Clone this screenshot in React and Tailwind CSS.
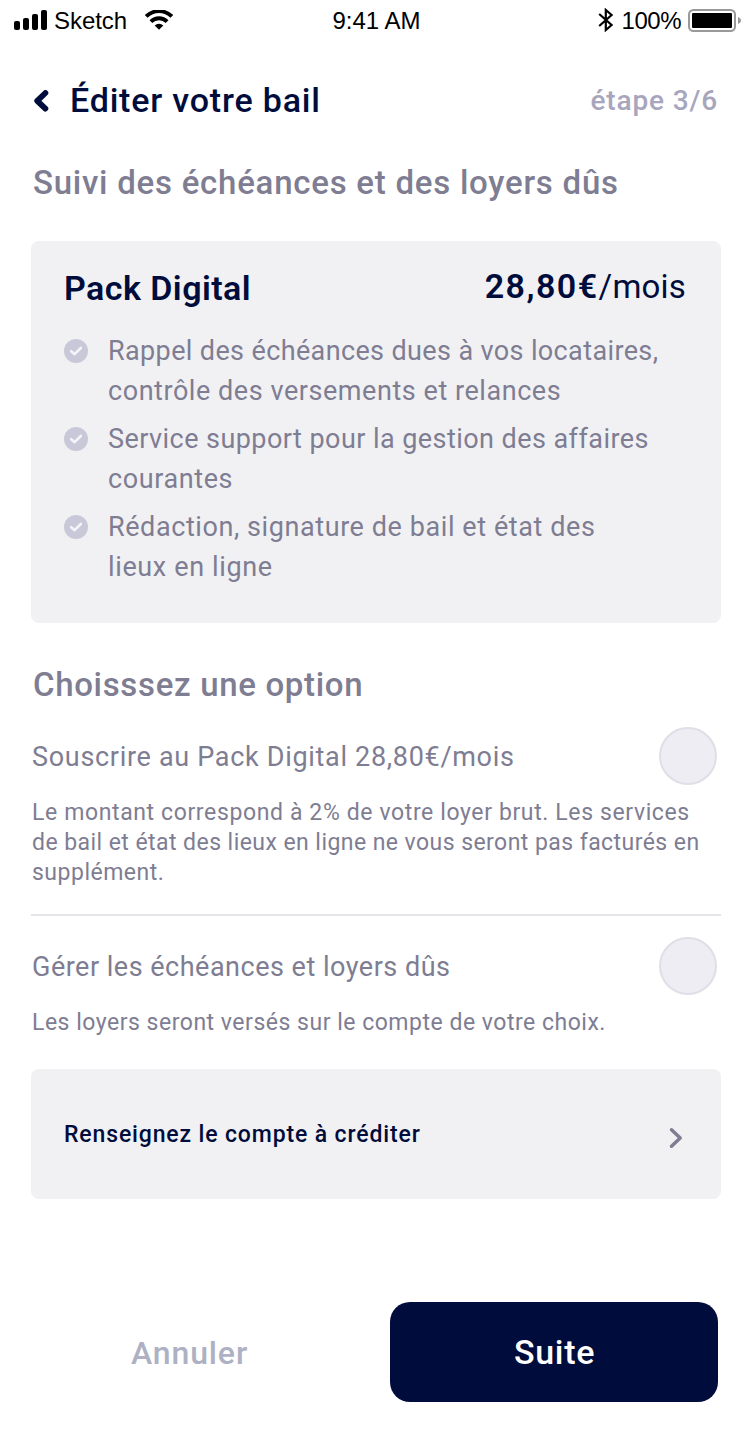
const FEATURES = [
  [
    { text: 'Rappel des échéances dues à vos locataires,', spacing: 'tracking-[0.37px]' },
    { text: 'contrôle des versements et relances', spacing: 'tracking-[0.55px]' },
  ],
  [
    { text: 'Service support pour la gestion des affaires', spacing: 'tracking-[0.44px]' },
    { text: 'courantes', spacing: 'tracking-[0.6px]' },
  ],
  [
    { text: 'Rédaction, signature de bail et état des', spacing: 'tracking-[0.58px]' },
    { text: 'lieux en ligne', spacing: 'tracking-[0.63px]' },
  ],
];

function StatusBar() {
  return (
    <div className="grid h-10 grid-cols-3 items-center pl-3.5 pr-[9px] font-['Liberation_Sans',sans-serif] text-[24px] leading-[40px] text-black">
      <div className="flex items-center">
        <svg width="33" height="20" viewBox="0 0 33 20" className="shrink-0">
          <rect x="0" y="11" width="6" height="9" rx="2" />
          <rect x="9" y="8" width="6" height="12" rx="2" />
          <rect x="18" y="4" width="6" height="16" rx="2" />
          <rect x="27" y="0" width="6" height="20" rx="2" />
        </svg>
        <span className="ml-[7px] translate-y-px tracking-[-0.05px]">Sketch</span>
        <svg width="28" height="20" viewBox="0 0 28 20" className="ml-[18px] shrink-0" fill="none" stroke="#000">
          <path d="M1.2 6.4A18.2 18.2 0 0 1 26.8 6.4" strokeWidth="3.9" />
          <path d="M5.9 11.6A11.6 11.6 0 0 1 22.1 11.6" strokeWidth="3.9" />
          <path d="M14 19.7 L9.7 15.5 A6.2 6.2 0 0 1 18.3 15.5 Z" fill="#000" stroke="none" />
        </svg>
      </div>
      <div className="translate-y-px whitespace-nowrap pr-0.5 text-center">9:41 AM</div>
      <div className="flex items-center justify-end">
        <svg width="16" height="24" viewBox="0 0 16 24" className="shrink-0" fill="none" stroke="#000" strokeWidth="2.2">
          <path d="M1.2 6 L13.6 17 L7.8 22 V2 L13.6 7 L1.2 18" />
        </svg>
        <span className="ml-2 translate-y-px tracking-[-0.5px]">100%</span>
        <svg width="53" height="23" viewBox="0 0 53 23" className="ml-[7px] shrink-0">
          <rect x="1" y="1" width="46" height="21" rx="4.5" fill="none" stroke="#999" strokeWidth="2" />
          <rect x="4" y="4" width="40" height="15" rx="1" />
          <path d="M50 8 C52 8.8 53 10 53 11.5 S52 14.2 50 15 Z" fill="#999" />
        </svg>
      </div>
    </div>
  );
}

function CheckBadge() {
  return (
    <svg width="24" height="24" viewBox="0 0 24 24" className="mt-2 shrink-0">
      <circle cx="12" cy="12" r="12" fill="#c9c8d8" />
      <path d="M7.2 12.2 L10.6 15.2 L16.8 9" fill="none" stroke="#f4f4f8" strokeWidth="2.6" strokeLinecap="round" strokeLinejoin="round" />
    </svg>
  );
}

function Radio({ label }) {
  return (
    <button
      type="button"
      role="radio"
      aria-checked="false"
      aria-label={label}
      className="mr-[2px] size-[58px] shrink-0 rounded-full border-2 border-[#dfdfe7] bg-[#eeedf3]"
    />
  );
}

export default function App() {
  return (
    <div className="h-[1434px] w-[750px] whitespace-nowrap bg-white font-['Roboto',sans-serif] text-[#7e7d92]">
      <StatusBar />

      <header className="mt-[41px] flex h-10 items-start pl-[33px] pr-[32px]">
        <svg width="16" height="22" viewBox="0 0 16 22" className="mt-[9px] shrink-0" fill="none" stroke="#000c3b" strokeWidth="5.8" strokeLinecap="round" strokeLinejoin="round">
          <path d="M12.4 3 L4.2 10.8 L12.4 18.6" />
        </svg>
        <h1 className="ml-[21px] text-[34px] font-medium leading-[38px] tracking-[0.8px] text-[#000c3b]">Éditer votre bail</h1>
        <span className="ml-auto text-[28px] font-medium leading-[40px] tracking-[0.85px] text-[#a7a6bd]">étape 3/6</span>
      </header>

      <main className="pl-[31px] pr-[29px]">
        <h2 className="mt-[42px] pl-0.5 text-[33px] font-medium leading-[40px] tracking-[0.75px]">
          Suivi des échéances et des loyers dûs
        </h2>

        <section className="mt-[38px] h-[382px] rounded-lg bg-[#f1f1f4] px-[33px] pt-7">
          <div className="flex h-10 justify-between text-[34px] leading-[38px] text-[#000c3b]">
            <h3 className="font-semibold tracking-[0.45px]">Pack Digital</h3>
            <p className="-mt-0.5 mr-0.5 text-[33px] tracking-[0.2px]">
              <span className="text-[34px] font-semibold tracking-[1.45px]">28,80€</span>/mois
            </p>
          </div>
          <ul className="mt-[22px] flex flex-col gap-2 text-[27px] leading-[40px]">
            {FEATURES.map((lines) => (
              <li key={lines[0].text} className="flex gap-5">
                <CheckBadge />
                <p>
                  {lines.map((line) => (
                    <span key={line.text} className={`block ${line.spacing}`}>{line.text}</span>
                  ))}
                </p>
              </li>
            ))}
          </ul>
        </section>

        <h2 className="mt-[42px] pl-0.5 text-[33px] font-medium leading-[40px] tracking-[0.67px]">Choisssez une option</h2>

        <section className="mt-[22px] border-b-2 border-[#e4e4e9] pb-[26px]">
          <div className="flex h-[58px] items-center justify-between pl-px pr-0.5 text-[27px] leading-[40px]">
            <span className="mt-0.5 tracking-[0.69px]">Souscrire au Pack Digital 28,80€/mois</span>
            <Radio label="Souscrire au Pack Digital" />
          </div>
          <p className="mt-[13px] pl-px text-[23px] leading-[30px]">
            <span className="block tracking-[0.62px]">Le montant correspond à 2% de votre loyer brut. Les services</span>
            <span className="block tracking-[0.44px]">de bail et état des lieux en ligne ne vous seront pas facturés en</span>
            <span className="block tracking-[0.5px]">supplément.</span>
          </p>
        </section>

        <section className="mt-[21px]">
          <div className="flex h-[58px] items-center justify-between pl-px pr-0.5 text-[27px] leading-[40px]">
            <span className="mt-0.5 tracking-[0.5px]">Gérer les échéances et loyers dûs</span>
            <Radio label="Gérer les échéances et loyers dûs" />
          </div>
          <p className="mt-[13px] pl-px text-[23px] leading-[30px] tracking-[0.51px]">
            Les loyers seront versés sur le compte de votre choix.
          </p>
        </section>

        <button type="button" className="mt-[31px] flex h-[130px] w-full items-center justify-between rounded-lg bg-[#f1f1f4] pl-[33px] pr-[38px]">
          <span className="pt-0.5 text-[23px] font-medium leading-[30px] tracking-[0.86px] text-[#000c3b]">Renseignez le compte à créditer</span>
          <svg width="14" height="22" viewBox="0 0 14 22" className="mt-2" fill="none" stroke="#7e7d92" strokeWidth="3.5" strokeLinecap="round" strokeLinejoin="round">
            <path d="M2.5 2.8 L11.2 11 L2.5 19.2" />
          </svg>
        </button>
      </main>

      <footer className="mt-[103px] flex h-[100px] justify-between pl-[31px] pr-8">
        <button type="button" className="w-[317px] pt-px text-[32px] font-medium tracking-[0.89px] text-[#aeb1c3]">Annuler</button>
        <button type="button" className="w-[328px] rounded-[20px] bg-[#000c3b] pl-px text-[34px] font-medium tracking-[0.7px] text-white">Suite</button>
      </footer>
    </div>
  );
}
